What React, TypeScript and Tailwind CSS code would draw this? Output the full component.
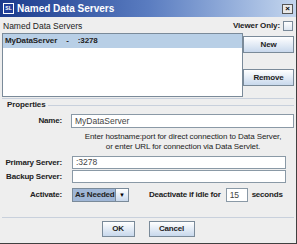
import React from 'react';

const font = { fontFamily: '"Liberation Sans", Arial, sans-serif' };

const Btn: React.FC<{ label: string; className?: string }> = ({ label, className = '' }) => (
  <button
    className={`flex items-center justify-center whitespace-nowrap border border-[#7a8a99] bg-gradient-to-b from-white to-[#c8d8ec] text-[8px] font-bold tracking-[-0.2px] text-[#222] ${className}`}
  >
    {label}
  </button>
);

const Field: React.FC<{ value?: string; className?: string }> = ({ value = '', className = '' }) => (
  <div className={`flex items-center whitespace-nowrap border border-[#8a99a6] bg-white px-[3px] text-[8.5px] text-[#444] ${className}`}>
    {value}
  </div>
);

const Label: React.FC<{ text: string }> = ({ text }) => (
  <span className="w-[65px] shrink-0 whitespace-nowrap pr-[5px] text-right text-[8px] font-bold tracking-[-0.2px] text-[#222]">
    {text}
  </span>
);

export default function App() {
  return (
    <div style={font} className="flex h-[244px] w-[297px] flex-col border-r border-b border-[#404040] bg-[#eeeeee]">
      {/* title bar */}
      <div className="flex h-[17px] shrink-0 items-center bg-gradient-to-r from-[#1b3a8c] via-[#5a7cc0] to-[#c4d6ee] pl-[3px] pr-[3px]">
        <div className="flex h-[11px] w-[11px] items-center justify-center border border-white bg-[#22409a] text-[5px] font-bold text-white">
          SL
        </div>
        <span className="ml-[3px] whitespace-nowrap text-[10px] font-bold text-white">Named Data Servers</span>
        <div className="ml-auto flex h-[10px] w-[11px] items-center justify-center border border-[#555] bg-[#e8e8e8] text-[8px] font-bold leading-none text-black">
          ×
        </div>
      </div>

      {/* servers header */}
      <div className="flex h-[16px] shrink-0 items-center px-[3px] pt-[2px]">
        <span className="whitespace-nowrap text-[8.5px] text-[#222]">Named Data Servers</span>
        <span className="ml-auto whitespace-nowrap text-[8px] font-bold tracking-[-0.1px] text-[#222]">Viewer Only:</span>
        <div className="ml-[3px] h-[10px] w-[10px] border border-[#7a8a99] bg-gradient-to-b from-white to-[#dde6f0]" />
      </div>

      {/* list + buttons */}
      <div className="flex h-[64px] shrink-0 pl-[2px] pr-[2px]">
        <div className="w-[241px] border border-[#7a8a99] bg-white">
          <div className="flex h-[14px] items-center whitespace-nowrap bg-[#b8cfe6] pl-[2px] text-[8px] font-bold tracking-[-0.1px] text-[#222]">
            MyDataServer<span className="ml-[9px]">-</span><span className="ml-[9px]">:3278</span>
          </div>
        </div>
        <div className="flex flex-1 flex-col pt-[3px]">
          <Btn label="New" className="h-[17px] w-[51px]" />
          <div className="h-[16px]" />
          <Btn label="Remove" className="h-[17px] w-[51px]" />
        </div>
      </div>

      {/* properties */}
      <div className="mx-[2px] mt-[1px] flex flex-1 flex-col border-t border-[#c8d0dc]">
        <div className="flex h-[12px] items-center pl-[5px]">
          <span className="whitespace-nowrap text-[8px] font-bold tracking-[-0.1px] text-[#222]">Properties</span>
          <div className="ml-[2px] h-px flex-1 bg-[#c8d0dc]" />
        </div>
        <div className="flex flex-1 flex-col pt-[3px]">
          <div className="flex h-[14px] items-center">
            <Label text="Name:" />
            <Field value="MyDataServer" className="ml-[4px] h-[14px] flex-1" />
          </div>
          <div className="flex flex-col items-center whitespace-nowrap pl-[70px] pt-[4px] text-[8px] leading-[10px] tracking-[-0.1px] text-[#222]">
            <span>Enter hostname:port for direct connection to Data Server,</span>
            <span>or enter URL for connection via Data Servlet.</span>
          </div>
          <div className="mt-[4px] flex h-[13px] items-center">
            <Label text="Primary Server:" />
            <Field value=":3278" className="ml-[5px] h-[13px] w-[214px]" />
          </div>
          <div className="mt-[1px] flex h-[13px] items-center">
            <Label text="Backup Server:" />
            <Field className="ml-[5px] h-[13px] w-[214px]" />
          </div>
          <div className="mt-[5px] flex h-[14px] items-center">
            <Label text="Activate:" />
            <div className="ml-[5px] flex h-[14px] w-[57px] border border-[#7a8a99]">
              <div className="flex flex-1 items-center whitespace-nowrap bg-[#9fb6d6] pl-[2px] text-[8px] font-bold tracking-[-0.2px] text-[#222]">
                As Needed
              </div>
              <div className="flex w-[13px] items-center justify-center border-l border-[#7a8a99] bg-gradient-to-b from-white to-[#c8d8ec] text-[6px] text-black">
                ▼
              </div>
            </div>
            <span className="ml-[20px] whitespace-nowrap text-[8px] font-bold tracking-[-0.2px] text-[#222]">Deactivate if idle for</span>
            <Field value="15" className="ml-[5px] h-[14px] w-[22px]" />
            <span className="ml-[4px] whitespace-nowrap text-[8px] font-bold tracking-[-0.2px] text-[#222]">seconds</span>
          </div>
        </div>
      </div>

      {/* footer */}
      <div className="mx-[2px] flex h-[26px] shrink-0 items-start justify-center gap-[14px] border-t border-[#c8d0dc] pt-[3px]">
        <Btn label="OK" className="h-[16px] w-[33px]" />
        <Btn label="Cancel" className="h-[16px] w-[46px]" />
      </div>
    </div>
  );
}
